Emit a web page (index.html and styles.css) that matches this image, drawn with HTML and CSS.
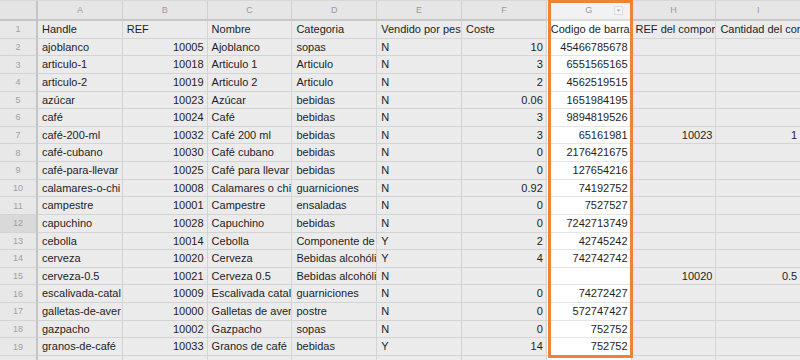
FILE: index.html
```html
<!DOCTYPE html>
<html>
<head>
<meta charset="utf-8">
<link rel="stylesheet" href="styles.css">
</head>
<body>
<div class="sheet">
  <div class="grid">
    <div class="corner"></div>
    <div class="ch">A</div><div class="ch">B</div><div class="ch">C</div><div class="ch">D</div><div class="ch">E</div><div class="ch">F</div>
    <div class="ch chg">G<span class="dd"><svg width="9" height="9" viewBox="0 0 9 9"><rect x="0.5" y="0.5" width="8" height="8" fill="#f6f6f6" stroke="#dcdcdc"/><path d="M2.5 3.5h4l-2 2.5z" fill="#b0b0b0"/></svg></span></div>
    <div class="ch">H</div><div class="ch">I</div>

    <div class="rh">1</div><div class="c">Handle</div><div class="c">REF</div><div class="c">Nombre</div><div class="c">Categoria</div><div class="c">Vendido por pes</div><div class="c">Coste</div><div class="c g gt">Codigo de barra</div><div class="c">REF del compor</div><div class="c">Cantidad del cor</div>

    <div class="rh">2</div><div class="c">ajoblanco</div><div class="c n">10005</div><div class="c">Ajoblanco</div><div class="c">sopas</div><div class="c">N</div><div class="c n">10</div><div class="c g n">45466785678</div><div class="c"></div><div class="c"></div>
    <div class="rh">3</div><div class="c">articulo-1</div><div class="c n">10018</div><div class="c">Articulo 1</div><div class="c">Articulo</div><div class="c">N</div><div class="c n">3</div><div class="c g n">6551565165</div><div class="c"></div><div class="c"></div>
    <div class="rh">4</div><div class="c">articulo-2</div><div class="c n">10019</div><div class="c">Articulo 2</div><div class="c">Articulo</div><div class="c">N</div><div class="c n">2</div><div class="c g n">4562519515</div><div class="c"></div><div class="c"></div>
    <div class="rh">5</div><div class="c">azúcar</div><div class="c n">10023</div><div class="c">Azúcar</div><div class="c">bebidas</div><div class="c">N</div><div class="c n">0.06</div><div class="c g n">1651984195</div><div class="c"></div><div class="c"></div>
    <div class="rh">6</div><div class="c">café</div><div class="c n">10024</div><div class="c">Café</div><div class="c">bebidas</div><div class="c">N</div><div class="c n">3</div><div class="c g n">9894819526</div><div class="c"></div><div class="c"></div>
    <div class="rh">7</div><div class="c">café-200-ml</div><div class="c n">10032</div><div class="c">Café 200 ml</div><div class="c">bebidas</div><div class="c">N</div><div class="c n">3</div><div class="c g n">65161981</div><div class="c n">10023</div><div class="c n">1</div>
    <div class="rh">8</div><div class="c">café-cubano</div><div class="c n">10030</div><div class="c">Café cubano</div><div class="c">bebidas</div><div class="c">N</div><div class="c n">0</div><div class="c g n">2176421675</div><div class="c"></div><div class="c"></div>
    <div class="rh">9</div><div class="c">café-para-llevar</div><div class="c n">10025</div><div class="c">Café para llevar</div><div class="c">bebidas</div><div class="c">N</div><div class="c n">0</div><div class="c g n">127654216</div><div class="c"></div><div class="c"></div>
    <div class="rh">10</div><div class="c">calamares-o-chi</div><div class="c n">10008</div><div class="c">Calamares o chi</div><div class="c">guarniciones</div><div class="c">N</div><div class="c n">0.92</div><div class="c g n">74192752</div><div class="c"></div><div class="c"></div>
    <div class="rh">11</div><div class="c">campestre</div><div class="c n">10001</div><div class="c">Campestre</div><div class="c">ensaladas</div><div class="c">N</div><div class="c n">0</div><div class="c g n">7527527</div><div class="c"></div><div class="c"></div>
    <div class="rh sel">12</div><div class="c">capuchino</div><div class="c n">10028</div><div class="c">Capuchino</div><div class="c">bebidas</div><div class="c">N</div><div class="c n">0</div><div class="c g n">7242713749</div><div class="c"></div><div class="c"></div>
    <div class="rh">13</div><div class="c">cebolla</div><div class="c n">10014</div><div class="c">Cebolla</div><div class="c">Componente de</div><div class="c">Y</div><div class="c n">2</div><div class="c g n">42745242</div><div class="c"></div><div class="c"></div>
    <div class="rh">14</div><div class="c">cerveza</div><div class="c n">10020</div><div class="c">Cerveza</div><div class="c">Bebidas alcohóli</div><div class="c">Y</div><div class="c n">4</div><div class="c g n">742742742</div><div class="c"></div><div class="c"></div>
    <div class="rh">15</div><div class="c">cerveza-0.5</div><div class="c n">10021</div><div class="c">Cerveza 0.5</div><div class="c">Bebidas alcohóli</div><div class="c">N</div><div class="c n"></div><div class="c g n"></div><div class="c n">10020</div><div class="c n">0.5</div>
    <div class="rh">16</div><div class="c">escalivada-catal</div><div class="c n">10009</div><div class="c">Escalivada catal</div><div class="c">guarniciones</div><div class="c">N</div><div class="c n">0</div><div class="c g n">74272427</div><div class="c"></div><div class="c"></div>
    <div class="rh">17</div><div class="c">galletas-de-aver</div><div class="c n">10000</div><div class="c">Galletas de aver</div><div class="c">postre</div><div class="c">N</div><div class="c n">0</div><div class="c g n">572747427</div><div class="c"></div><div class="c"></div>
    <div class="rh">18</div><div class="c">gazpacho</div><div class="c n">10002</div><div class="c">Gazpacho</div><div class="c">sopas</div><div class="c">N</div><div class="c n">0</div><div class="c g n">752752</div><div class="c"></div><div class="c"></div>
    <div class="rh">19</div><div class="c">granos-de-café</div><div class="c n">10033</div><div class="c">Granos de café</div><div class="c">bebidas</div><div class="c">Y</div><div class="c n">14</div><div class="c g n">752752</div><div class="c"></div><div class="c"></div>
    <div class="rh"></div><div class="c"></div><div class="c"></div><div class="c"></div><div class="c"></div><div class="c"></div><div class="c"></div><div class="c g"></div><div class="c"></div><div class="c"></div>
  </div>
  <div class="hl"></div>
</div>
</body>
</html>
```

FILE: styles.css
```css
html, body {
  margin: 0;
  padding: 0;
  background: #ebebeb;
  overflow: hidden;
}
.sheet {
  position: relative;
  width: 800px;
  height: 360px;
  overflow: hidden;
  font-family: "Liberation Sans", Arial, sans-serif;
  font-size: 11px;
  color: #1e1e1e;
}
.grid {
  display: grid;
  grid-template-columns: 38px repeat(9, 84.8px);
  grid-template-rows: 20px repeat(20, 17.63px);
  border-top: 1px solid #d8d8d8;
}
.corner {
  background: #e4e4e4;
  border-right: 2px solid #c4c4c4;
  border-bottom: 2px solid #c4c4c4;
  box-sizing: border-box;
}
.ch {
  background: #e6e6e6;
  border-right: 1px solid #d0d0d0;
  border-bottom: 2px solid #c8c8c8;
  box-sizing: border-box;
  display: flex;
  align-items: center;
  justify-content: center;
  color: #9a9a9a;
  font-size: 9px;
  position: relative;
}
.chg {
  background: #f2f2f2;
  border-bottom-color: #dcdcdc;
}
.dd {
  position: absolute;
  right: 8px;
  top: 5px;
  line-height: 0;
}
.rh {
  background: #e8e8e8;
  border-right: 2px solid #c4c4c4;
  border-bottom: 1px solid #d4d4d4;
  box-sizing: border-box;
  display: flex;
  align-items: center;
  justify-content: center;
  color: #a0a0a0;
  font-size: 9px;
}
.rh.sel {
  background: #d9d9d9;
}
.c {
  border-right: 1px solid #d4d4d4;
  border-bottom: 1px solid #d4d4d4;
  box-sizing: border-box;
  padding: 0 3px 0 4px;
  white-space: nowrap;
  overflow: hidden;
  line-height: 16px;
}
.c.n {
  text-align: right;
}
.c.g {
  background: #ffffff;
  border-bottom-color: #e4e4e4;
  padding-left: 4px;
  padding-right: 3px;
}
.c.gt {
  padding-right: 0;
}
.hl {
  position: absolute;
  left: 548px;
  top: 0;
  width: 85px;
  height: 358px;
  border: 3px solid #ee8536;
  box-sizing: border-box;
  pointer-events: none;
}
```
